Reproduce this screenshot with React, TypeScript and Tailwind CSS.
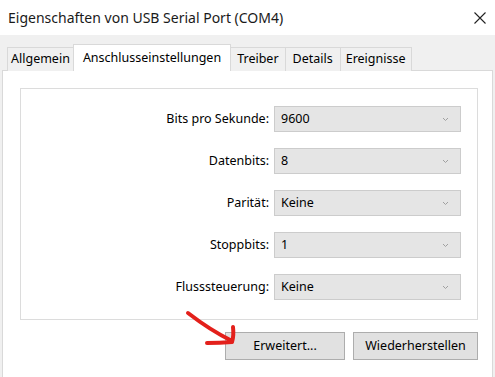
import React from "react";

const rows: [string, string][] = [
  ["Bits pro Sekunde:", "9600"],
  ["Datenbits:", "8"],
  ["Parität:", "Keine"],
  ["Stoppbits:", "1"],
  ["Flusssteuerung:", "Keine"],
];

function Chevron() {
  return (
    <svg width="7" height="5" viewBox="0 0 7 5" className="mr-[11px]">
      <path d="M1 1 L3.5 3.5 L6 1" fill="none" stroke="#a0a0a0" strokeWidth="1" />
    </svg>
  );
}

export default function App() {
  return (
    <div
      className="relative w-[495px] h-[377px] overflow-hidden bg-[#f0f0f0] text-[#000]"
      style={{ fontFamily: '"Noto Sans", "Open Sans", sans-serif' }}
    >
      {/* Title bar */}
      <div className="h-[35px] bg-white flex items-center justify-between pl-[8px] pr-[8px]">
        <span className="text-[14px] text-[#1a1a1a] leading-none">Eigenschaften von USB Serial Port (COM4)</span>
        <svg width="12" height="12" viewBox="0 0 12 12" className="mr-[1px]">
          <path d="M0.5 0.5 L11.5 11.5 M11.5 0.5 L0.5 11.5" stroke="#222" strokeWidth="1.1" />
        </svg>
      </div>

      {/* Tabs */}
      <div className="h-[35px] flex items-end pl-[7px]">
        <div className="h-[24px] px-[3px] flex items-center border border-b-0 border-r-0 border-[#d9d9d9] bg-[#f0f0f0] text-[12.5px] relative top-[1px]">
          Allgemein
        </div>
        <div className="h-[27px] px-[9px] flex items-center border border-b-0 border-[#d9d9d9] bg-white text-[12.5px] relative top-[1px] z-10">
          Anschlusseinstellungen
        </div>
        <div className="h-[24px] px-[6px] flex items-center border border-b-0 border-l-0 border-[#d9d9d9] bg-[#f0f0f0] text-[12.5px] relative top-[1px]">
          Treiber
        </div>
        <div className="h-[24px] px-[7px] flex items-center border border-b-0 border-l-0 border-[#d9d9d9] bg-[#f0f0f0] text-[12.5px] relative top-[1px]">
          Details
        </div>
        <div className="h-[24px] px-[5px] flex items-center border border-b-0 border-l-0 border-[#d9d9d9] bg-[#f0f0f0] text-[12.5px] relative top-[1px]">
          Ereignisse
        </div>
      </div>

      {/* Pane */}
      <div className="ml-[2px] w-[491px] h-[320px] bg-white border border-[#d9d9d9] pt-[17px] pl-[17px] pr-[14px]">
        <div className="h-[232px] border border-[#dcdcdc] pt-[17px] pr-[16px] flex flex-col gap-[16px]">
          {rows.map(([label, value]) => (
            <div key={label} className="flex items-center justify-end h-[26px]">
              <span className="text-[12.5px] mr-[5px]">{label}</span>
              <div className="w-[187px] h-[26px] bg-[#e5e5e5] border border-[#cccccc] flex items-center justify-between pl-[6px]">
                <span className="text-[12.5px]">{value}</span>
                <Chevron />
              </div>
            </div>
          ))}
        </div>
        <div className="flex justify-end gap-[8px] mt-[12px]">
          <div className="w-[120px] h-[28px] bg-[#e1e1e1] border border-[#adadad] flex items-center justify-center text-[12.5px]">
            Erweitert...
          </div>
          <div className="w-[125px] h-[28px] bg-[#e1e1e1] border border-[#adadad] flex items-center justify-center text-[12.5px]">
            Wiederherstellen
          </div>
        </div>
      </div>

      {/* Red arrow annotation */}
      <svg className="absolute left-0 top-0 pointer-events-none" width="495" height="377">
        <path
          d="M188 313 Q210 330 232 341 M233 327 Q234 336 232 342 Q220 343 207 343"
          fill="none"
          stroke="#e3201b"
          strokeWidth="4"
          strokeLinecap="round"
          strokeLinejoin="round"
        />
      </svg>
    </div>
  );
}
